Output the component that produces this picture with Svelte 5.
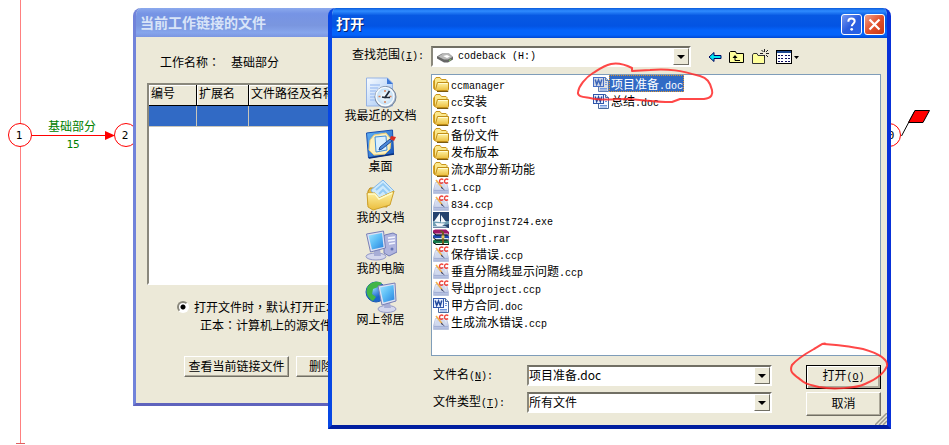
<script>
  const files = [
    { name: 'ccmanager', kind: 'folder' },
    { name: 'cc安装', kind: 'folder' },
    { name: 'ztsoft', kind: 'folder' },
    { name: '备份文件', kind: 'folder' },
    { name: '发布版本', kind: 'folder' },
    { name: '流水部分新功能', kind: 'folder' },
    { name: '1.ccp', kind: 'ccp' },
    { name: '834.ccp', kind: 'ccp' },
    { name: 'ccprojinst724.exe', kind: 'exe' },
    { name: 'ztsoft.rar', kind: 'rar' },
    { name: '保存错误.ccp', kind: 'ccp' },
    { name: '垂直分隔线显示问题.ccp', kind: 'ccp' },
    { name: '导出project.ccp', kind: 'ccp' },
    { name: '甲方合同.doc', kind: 'doc' },
    { name: '生成流水错误.ccp', kind: 'ccp' },
    { name: '项目准备.doc', kind: 'doc' },
    { name: '总结.doc', kind: 'doc' }
  ];
  const places = [
    { label: '我最近的文档', icon: 'recent' },
    { label: '桌面', icon: 'desktop' },
    { label: '我的文档', icon: 'documents' },
    { label: '我的电脑', icon: 'computer' },
    { label: '网上邻居', icon: 'network' }
  ];
  let selected = $state('项目准备.doc');
  let filename = $state('项目准备.doc');

  // Runs of ASCII get the narrow monospaced face
  const runs = (s) =>
    (s.match(/[\x20-\x7e]+|[^\x20-\x7e]+/g) ?? []).map((t) => ({ t, ascii: t.charCodeAt(0) < 128 }));

  function pick(name) {
    selected = name;
    filename = name;
  }
</script>

{#snippet mixed(s)}{#each runs(s) as r}{#if r.ascii}<span class="ascii">{r.t}</span>{:else}{r.t}{/if}{/each}{/snippet}

{#snippet fileIcon(kind)}
  <svg class="file-icon" viewBox="0 0 16 16" aria-hidden="true">
    {#if kind === 'folder'}
      <path d="M1.500 13V3.500L3 1.500h4l1.500 2H13l1 1v2" fill="#fbe88c" stroke="#c9951c" />
      <path d="M.5 4.500V12.500L2.500 14.500" fill="none" stroke="#d9a629" />
      <path d="M4.500 6.500H15.500V13.500L14.500 14.500H3.500L2.500 13.500z" fill="url(#folderFront)" stroke="#c08d17" />
      <path d="M5 7.500h9.500" stroke="#fffbd2" />
      <path d="M4 15.500h11l1-1" fill="none" stroke="#7a5a12" />
    {:else if kind === 'ccp'}
      <path d="M2.500 4.500h11L15.500 12v3.500H.5V12z" fill="url(#ccpBase)" stroke="#b4bfdc" stroke-width=".8" />
      <path d="M1 12.500h14" stroke="#a3b0d6" />
      <path d="M3.500 5.500h8l1.500 6H2.500z" fill="#d0d9ee" />
      <path d="M3 2l6 7.500" stroke="#f0b14d" stroke-width="1.600" />
      <path d="M8.500 8.500l3.500 4-4-2.500z" fill="#34385c" />
      <path d="M10.300 1.600c-2.300-1.300-3.800 0-3.800 1.700s1.600 2.600 3.600 1.400M15.300 1.600c-2.300-1.300-3.800 0-3.800 1.700s1.600 2.600 3.600 1.400" fill="none" stroke="#f0453c" stroke-width="1.400" />
    {:else if kind === 'exe'}
      <rect width="16" height="16" fill="#25436f" />
      <path d="M0 9h16v3l-7 2H0z" fill="#6f9cb3" />
      <path d="M7 1v9L1 9.500zM8 3l5 7-5 .5zM2 11l10 .5-3 2.500H4z" fill="#f5f9fc" />
      <path d="M0 14h12l3 1.500H0z" fill="#b8cddb" />
    {:else if kind === 'rar'}
      <path d="M0 1.500L2 .5h11l3 2.500v2H3L0 3.500z" fill="#9c1767" />
      <path d="M3 5h12" stroke="#f0d7e7" />
      <path d="M0 6.500l2-1h12l2 2v2H3L0 8.500z" fill="#1c49b0" />
      <path d="M3 9.500h12" stroke="#d8e6ff" />
      <path d="M0 11.500l2-1h12l2 2v2.500H3L0 13.500z" fill="#14794a" />
      <path d="M3 14.500h12" stroke="#dcf4e2" />
      <path d="M0 3.500L3 6h13M0 8.500L3 11h13M0 13.500L3 15.500h13" fill="none" stroke="#111" />
      <path d="M8 1l3 2v12H9V4L7 2z" fill="#71591f" />
      <path d="M8.500 6.500h3v3h-3z" fill="#e3c75a" />
    {:else}
      <path d="M5.500 1.500h7l3 3v11h-10z" fill="#f7faff" stroke="#49699f" />
      <path d="M12.500 1.500v3h3" fill="#c5d8f5" stroke="#49699f" />
      <path d="M12 6.500h2M12 8.500h2M7 12.500h7M7 14h7" stroke="#6e95dd" />
      <rect x=".5" y="1.500" width="10" height="9" fill="#e9f1ff" stroke="#2e55ab" />
      <path d="M2.200 3.500l1.500 5L5.500 4l1.800 4.500 1.500-5" fill="none" stroke="#234a9d" stroke-width="1.500" />
    {/if}
  </svg>
{/snippet}

{#snippet placeIcon(kind)}
  <svg class="place-icon" viewBox="0 0 32 32" aria-hidden="true">
    {#if kind === 'recent'}
      <path d="M1.500 1h21l5 5v23h-26z" fill="url(#paper)" stroke="#96b3e4" />
      <path d="M22 1v6h6z" fill="#3d78d6" />
      <path d="M5 8h10M5 11h8M5 14h6M5 17h5M5 20h5M5 23h6" stroke="#a8c5f3" stroke-width="1.500" />
      <circle cx="20.500" cy="20" r="10.500" fill="#9fb0c7" stroke="#74849b" />
      <circle cx="20" cy="19.500" r="9" fill="url(#clockFace)" stroke="#f5faff" stroke-width="1.500" />
      <path d="M20 13v2M20 24v2M13.500 19.500h2M24.500 19.500h2" stroke="#d68059" stroke-width="1.500" />
      <path d="M24.500 14l-4.500 6.500-3-.5M20 20.500h5" fill="none" stroke="#222b38" stroke-width="1.700" />
    {:else if kind === 'desktop'}
      <path d="M1.500 5l26-3 1 24-25 4z" fill="url(#deskBlue)" stroke="#164eaf" />
      <path d="M4 30l25-4" fill="none" stroke="#0c327c" stroke-width="1.500" />
      <path d="M9 7l12-2 5 6-1 10-5 5-11 1-5-5 1-10z" fill="#fcf0be" stroke="#eacb74" />
      <path d="M10 9l11-1 1 14-11 2z" fill="#d9efff" stroke="#4290dc" />
      <path d="M15 19l-1 3 3-1 10-8-2-2z" fill="#4b8adc" stroke="#1f4b95" />
      <path d="M26 8l5 1-2 4-4-2z" fill="#d92c20" />
    {:else if kind === 'documents'}
      <path d="M3 12l2-3h6l3 3 8-1v17L3 26z" fill="#eabd45" stroke="#bd8c1b" />
      <path d="M6 11L18 1l11 11-10 14-6-2z" fill="#cce9fc" stroke="#81b7ea" />
      <path d="M11 11l7-6 7 7M14 15l4-4 4 4" fill="none" stroke="#93cbf4" stroke-width="2" />
      <path d="M2 14h8l4 5 15-7-4 14-17 5-5-3z" fill="url(#folderFront)" stroke="#cda02b" />
      <path d="M3 15h7l4 5 13-6" fill="none" stroke="#fffbc9" stroke-width="1.500" />
    {:else if kind === 'computer'}
      <path d="M20 5l8-2 4 2v17l-8 4-5-3V6z" fill="#b0b5df" stroke="#727bb5" />
      <path d="M23 8l7-1M23 11l7-1M24 14l6-1" stroke="#f2f4ff" stroke-width="1.500" />
      <circle cx="27" cy="19" r="1.500" fill="#6574b5" />
      <ellipse cx="11" cy="26.500" rx="10" ry="3.500" fill="#d4d7ed" stroke="#9298c5" />
      <path d="M9 20l6-1 1 7H9z" fill="#a7add6" />
      <path d="M1.500 4l17-3 2 17-15 4z" fill="#dce1f3" stroke="#777fb6" />
      <path d="M3.500 5.500L17 3l1.500 14L7 19.500z" fill="url(#screen)" />
    {:else}
      <circle cx="11" cy="11" r="10" fill="url(#globe)" stroke="#1859b4" />
      <path d="M3 5c4-5 10-5 14-3l-4 4-5 2-1 5 4 3-3 4C2 17 0 10 3 5z" fill="#42b547" />
      <ellipse cx="22" cy="28" rx="9" ry="3.500" fill="#d4d7ed" stroke="#9298c5" />
      <path d="M20 22l5-1 1 6h-7z" fill="#a7add6" />
      <path d="M13 5l17-3 1 18-14 4z" fill="#dce1f3" stroke="#777fb6" />
      <path d="M15 6.500L28.500 4l1 14.500-11 3z" fill="url(#screen)" />
    {/if}
  </svg>
{/snippet}

<main class="desktop">
  <svg class="defs" width="0" height="0" aria-hidden="true">
    <defs>
      <linearGradient id="folderFront" x2="0" y2="1"><stop stop-color="#fff5a8" /><stop offset="1" stop-color="#ebbd3d" /></linearGradient>
      <linearGradient id="ccpBase" x2="0" y2="1"><stop stop-color="#f5f7fd" /><stop offset="1" stop-color="#a8b5da" /></linearGradient>
      <linearGradient id="paper" x2="1" y2="1"><stop stop-color="#f9fcff" /><stop offset="1" stop-color="#9cc2f4" /></linearGradient>
      <radialGradient id="clockFace"><stop stop-color="#fff" /><stop offset="1" stop-color="#bddcf5" /></radialGradient>
      <linearGradient id="deskBlue" x2="1" y2="1"><stop stop-color="#64b5f7" /><stop offset="1" stop-color="#1452b8" /></linearGradient>
      <linearGradient id="screen" x2="1" y2="1"><stop stop-color="#9fe5ff" /><stop offset=".5" stop-color="#58baf5" /><stop offset="1" stop-color="#2b81dd" /></linearGradient>
      <radialGradient id="globe" cx=".35" cy=".3"><stop stop-color="#94d6ff" /><stop offset="1" stop-color="#1c65cb" /></radialGradient>
    </defs>
  </svg>

  <svg class="diagram" width="949" height="445" aria-label="网络图">
    <path d="M20.500 0v443" stroke="#ff8080" />
    <path d="M16 443.500h9" stroke="#e06060" />
    <path d="M32 135.500h76" stroke="red" />
    <path d="M105 131l10 4.500-10 4.500z" fill="red" />
    <circle cx="20" cy="135" r="11.500" fill="#fff" stroke="red" />
    <circle cx="126" cy="135" r="11.500" fill="#fff" stroke="red" />
    <circle cx="889" cy="135" r="11.500" fill="#fff" stroke="red" />
    <text class="num" x="19" y="139">1</text>
    <text class="num" x="125" y="139">2</text>
    <text class="num" x="891" y="139">0</text>
    <text class="task" x="72" y="131">基础部分</text>
    <text class="num task" x="73" y="148">15</text>
    <path d="M901.500 136L915 110.500" stroke="#000" />
    <path d="M915 110.500h14.500L923 122.500h-14.500z" fill="red" stroke="#000" />
  </svg>

  <section class="window back" aria-label="当前工作链接的文件">
    <header>当前工作链接的文件</header>
    <div class="back-body">
      <p class="job"><span>工作名称<span class="punct">：</span></span><span>基础部分</span></p>
      <div class="grid-box">
        <table>
          <thead><tr><th>编号</th><th>扩展名</th><th>文件路径及名称</th></tr></thead>
          <tbody><tr><td></td><td></td><td></td></tr></tbody>
        </table>
      </div>
      <label class="choice"><input type="radio" name="mode" checked /><span>打开文件时<span class="punct">，</span>默认打开正本</span></label>
      <p class="hint">正本<span class="punct">：</span>计算机上的源文件</p>
      <div class="back-actions">
        <button type="button" class="view">查看当前链接文件</button>
        <button type="button" class="delete">删除</button>
      </div>
    </div>
  </section>

  <section class="window dialog" aria-label="打开">
    <header>
      <h1>打开</h1>
      <button type="button" class="caption help" aria-label="帮助">
        <svg viewBox="0 0 21 21"><path d="M7 7.500C7 4.500 9 4 10.500 4c2 0 3.500 1.200 3.500 3 0 2.500-3.200 2.800-3.200 5.500" fill="none" stroke="#fff" stroke-width="2.200" /><circle cx="10.700" cy="15.800" r="1.500" fill="#fff" /></svg>
      </button>
      <button type="button" class="caption close" aria-label="关闭">
        <svg viewBox="0 0 21 21"><path d="M5 5l11 11M16 5L5 16" stroke="#fff" stroke-width="2.500" /></svg>
      </button>
    </header>
    <div class="body">
      <div class="lookup">
        <label for="where">查找范围<span class="ascii">(<u>I</u>):</span></label>
        <div class="combo">
          <svg class="drive" viewBox="0 0 16 16" aria-hidden="true">
            <path d="M0 7.500l5-3h7l4 3.500v2.500l-5 3H7L0 9.500z" fill="#666" />
            <path d="M1 7.500L6 4.500h6l3.500 3.500-4.500 2.500H7z" fill="#b9b9b9" />
            <path d="M6 7l4-1 3 1.500-3 1.500z" fill="#fff" />
            <path d="M12 11.500l2-1" stroke="#83d85c" />
          </svg>
          <select id="where" class="where"><option>codeback (H:)</option></select>
          <span class="drop" aria-hidden="true"></span>
        </div>
        <div class="tools">
          <button type="button" aria-label="后退"><svg width="14" height="16" viewBox="0 0 14 16"><path d="M1 8l5-4.500v3h7v3H6v3z" fill="#00e5f0" stroke="#000060" /></svg></button>
          <button type="button" aria-label="向上一级"><svg width="16" height="16" viewBox="0 0 16 16"><path d="M.5 13.500v-10l1-1h5l1 2h7v9z" fill="#ffff9b" stroke="#000" /><path d="M3.500 9L6 6l2.500 3z" /><path d="M6 8v3.500h5" fill="none" stroke="#000" /></svg></button>
          <button type="button" aria-label="新建文件夹"><svg width="17" height="16" viewBox="0 0 17 16"><path d="M.5 14.500V6l1-1.500H5l1 2h6.500v8z" fill="#ffff9b" stroke="#333" /><path d="M12.500 0v3M12.500 6v3M8 4.500h3M14 4.500h3M9.500 1l2 2M16 1l-2 2M14 6l2 2" stroke="#222" /></svg></button>
          <button type="button" aria-label="查看菜单"><svg width="24" height="16" viewBox="0 0 24 16"><rect x=".5" y="1.500" width="15" height="13" fill="#fff" stroke="#000" /><path d="M1 3h14" stroke="#1b478e" stroke-width="2" /><path d="M2 6.500h2M5 6.500h2M9 6.500h2M12 6.500h2M2 9.500h2M5 9.500h2M9 9.500h2M12 9.500h2M2 12.500h2M5 12.500h2M9 12.500h2M12 12.500h2" stroke="#101060" /><path d="M18 7h5l-2.500 3z" /></svg></button>
        </div>
      </div>

      <div class="middle">
        <nav class="places" aria-label="位置">
          {#each places as p}
            <button type="button">{@render placeIcon(p.icon)}<span>{p.label}</span></button>
          {/each}
        </nav>
        <div class="right">
          <ul class="files">
            {#each files as f}
              <li>
                <button type="button" class:selected={selected === f.name} onclick={() => pick(f.name)}>
                  {@render fileIcon(f.kind)}<span class="name">{@render mixed(f.name)}</span>
                </button>
              </li>
            {/each}
          </ul>
          <div class="form">
            <div class="fields">
              <label for="fname">文件名<span class="ascii"> (<u>N</u>):</span></label>
              <div class="combo">
                <input id="fname" type="text" bind:value={filename} />
                <button type="button" class="drop" aria-label="最近的文件名"></button>
              </div>
              <label for="ftype">文件类型<span class="ascii">(<u>T</u>):</span></label>
              <div class="combo">
                <select id="ftype"><option>所有文件</option></select>
                <span class="drop" aria-hidden="true"></span>
              </div>
            </div>
            <div class="confirm">
              <button type="button" class="default">打开<span class="ascii">(<u>O</u>)</span></button>
              <button type="button">取消</button>
            </div>
          </div>
        </div>
      </div>
    </div>
    <svg class="grip" width="12" height="12" aria-hidden="true"><path d="M0 12L12 0M4 12l8-8M8 12l4-4" stroke="#9c9a8c" stroke-width="1.500" /></svg>
  </section>

  <svg class="marks" width="949" height="445" aria-hidden="true">
    <path d="M632 68c-8-4-16-5-21-4-8 2-13 6-18 9-8 5-14 13-15 19-1 5 6 5 12 6 12 3 24 1 36 1 12 0 24 3 46 3l8-3h24c8-1 9-5 8-9-2-8-5-12-12-14-18-5-32-8-50-6l-18 1z" />
    <path d="M826 344c-3-2-6 2-12 5-9 5-16 9-22 16-3 7 1 9 9 15 5 5 11 5 18 7 14 3 37 1 46-3 12-5 19-10 22-18 1-7-10-13-24-17-10-2-20-3-27-4l-12-1z" />
  </svg>
</main>

<style>
  :global(body) { background: #fff; }
  .desktop {
    position: relative;
    min-height: 100vh;
    overflow: hidden;
    font: 12px/16px "Noto Sans CJK SC", sans-serif;
    color: #000;
  }
  button, input, select { font: inherit; color: inherit; margin: 0; padding: 0; border: 0; background: none; border-radius: 0; }
  p, ul, h1 { margin: 0; padding: 0; }
  .ascii { font-family: "Liberation Mono", monospace; font-size: 10px; white-space: pre; }
  .punct { font-family: "Noto Sans CJK TC", sans-serif; }
  .defs { position: absolute; }
  .diagram, .marks { position: absolute; left: 0; top: 0; }
  .marks { pointer-events: none; }
  .marks path { fill: none; stroke: #ff2828; stroke-opacity: .85; stroke-width: 2; stroke-linejoin: round; }
  .diagram text { text-anchor: middle; }
  .num { font: 11px "DejaVu Sans Mono", monospace; }
  .task { fill: #008000; }

  .window { position: absolute; top: 8px; box-sizing: border-box; background: #ece9d8; border-radius: 8px 8px 0 0; overflow: hidden; }
  .window header { display: flex; align-items: center; box-sizing: border-box; font-weight: bold; font-size: 14px; line-height: 20px; }

  .back { left: 133px; width: 300px; border: solid #7183da; border-width: 0 3px 3px; border-bottom-color: #5f63bd; }
  .back header { height: 29px; margin: 0 -3px; padding: 0 7px 2px; color: #d8e4f8; background: linear-gradient(#8ba9ed, #7694e5 20%, #7a96df 60%, #86a5ec 85%, #7b96e1); }
  .back-body { padding: 0 0 26px 11px; }
  .job { display: flex; gap: 11px; padding: 17px 0 13px 13px; }
  .grid-box { height: 202px; box-sizing: border-box; border: 2px solid #fff; border-top-color: #8a887c; border-left-color: #8a887c; background: #fff; overflow: hidden; }
  table { table-layout: fixed; width: 300px; border-collapse: separate; border-spacing: 0; }
  th { box-sizing: border-box; height: 21px; padding: 0 0 4px 2px; font-weight: normal; text-align: left; white-space: nowrap; background: #ece9d8; border: solid #000; border-width: 0 1px 1px 0; line-height: 16px; box-shadow: inset 1px 1px #fff; }
  td { box-sizing: border-box; height: 21px; padding: 0; background: #316ac5; border: solid #c9c6ba; border-width: 0 1px 1px 0; }
  th:nth-child(1) { width: 48px; }
  th:nth-child(2) { width: 52px; }
  .choice { display: flex; align-items: center; gap: 5px; padding: 14px 0 1px 30px; white-space: nowrap; }
  .choice input { appearance: none; box-sizing: border-box; width: 12px; height: 12px; border: 2px solid #fff; border-top-color: #8a887c; border-left-color: #8a887c; border-radius: 50%; background: radial-gradient(circle, #000 2px, #fff 3px); }
  .hint { padding: 1px 0 0 53px; white-space: nowrap; }
  .back-actions { display: flex; gap: 7px; padding: 23px 0 0 37px; }
  .back-actions button, .confirm button { background: #ece9d8; border: 1px solid; border-color: #fff #716f64 #716f64 #fff; box-shadow: inset -1px -1px #aca899; white-space: nowrap; }
  .back-actions button { height: 21px; padding-bottom: 2px; line-height: 16px; }
  .view { width: 105px; flex: none; }
  .delete { width: 50px; }

  .dialog { left: 328px; width: 563px; border: solid #0a3fdc; border-width: 0 4px 4px; border-right-color: #0831d9; border-bottom-color: #001ea0; border-left-color: #0747e4; }
  .dialog header { height: 30px; margin: 0 -4px; padding: 2px 6px 0 8px; gap: 2px; color: #fff; background: linear-gradient(#0a5bdb, #2f8cff 10%, #0759e3 25%, #0354e3 60%, #0464fb 75%, #0464fb 90%, #0047d2); }
  h1 { flex: 1; padding-bottom: 2px; font-size: 14px; text-shadow: 1px 1px #0a246a; }
  .caption { width: 21px; height: 21px; box-sizing: border-box; border: 1px solid #fff; border-radius: 3px; display: flex; }
  .caption svg { width: 100%; height: 100%; }
  .help { background: linear-gradient(135deg, #7899f0, #2b5ddf 50%, #2463e8); }
  .close { background: linear-gradient(135deg, #f0a18b, #e2512b 50%, #c93814); }

  .body { padding: 8px 6px 9px 0; }
  .lookup { display: flex; align-items: center; }
  .lookup label { width: 79px; padding: 0 0 2px 20px; }
  .combo { position: relative; flex: none; display: flex; align-items: center; box-sizing: border-box; height: 21px; background: #fff; border: 2px solid #fff; border-top-color: #716f64; border-left-color: #8a887c; }
  .lookup .combo { width: 260px; padding-left: 4px; gap: 5px; }
  .drive { width: 16px; height: 16px; }
  .combo select, .combo input { flex: 1; min-width: 0; height: 17px; padding-bottom: 2px; box-sizing: border-box; appearance: none; outline: none; line-height: 15px; }
  .combo .where { padding: 1px 0 0; font: 10px/16px "Liberation Mono", monospace; }
  .drop { position: absolute; right: 0; top: 0; width: 16px; height: 17px; box-sizing: border-box; background: #ece9d8; border: 1px solid; border-color: #fff #716f64 #716f64 #fff; pointer-events: none; }
  button.drop { pointer-events: auto; }
  .drop::after { content: ""; position: absolute; left: 3px; top: 6px; border: 4px solid transparent; border-top-color: #000; border-bottom: 0; }
  .tools { display: flex; gap: 7px; padding-left: 17px; }
  .tools button { display: flex; }

  .middle { display: flex; padding-top: 7px; }
  .places { width: 97px; padding: 3px 2px 0 0; flex: none; display: flex; flex-direction: column; gap: 3px; }
  .places button { display: flex; flex-direction: column; align-items: center; height: 48px; }
  .places span { line-height: 12px; }
  .place-icon { width: 32px; height: 32px; }
  .right { flex: 1; min-width: 0; }
  .files { list-style: none; height: 282px; box-sizing: border-box; padding: 0 1px; border: 1px solid #7f9db9; background: #fff; display: grid; grid-auto-flow: column; grid-template-rows: repeat(15, 17px); grid-auto-columns: 160px; align-content: start; }
  .files button { display: flex; height: 17px; align-items: center; }
  .file-icon { width: 16px; height: 16px; }
  .name { padding: 0 1px 0 2px; line-height: 17px; height: 17px; white-space: nowrap; }
  .selected .name { background: #316ac5; color: #fff; outline: 1px dotted #e0952c; outline-offset: -1px; }
  .selected .file-icon { filter: brightness(.85) saturate(1.5); opacity: .8; }

  .form { display: flex; justify-content: space-between; padding-top: 9px; }
  .fields { display: grid; grid-template-columns: 94px 245px; row-gap: 6px; padding-left: 2px; align-content: start; align-items: center; }
  .confirm { display: flex; flex-direction: column; gap: 3px; }
  .confirm button { width: 75px; height: 24px; padding-bottom: 2px; line-height: 16px; }
  .confirm .default { outline: 1px solid #000; outline-offset: -1px; border-color: #000; box-shadow: inset 1px 1px #fff, inset -2px -2px #aca899; }
  .grip { position: absolute; right: 0; bottom: 0; }
</style>
